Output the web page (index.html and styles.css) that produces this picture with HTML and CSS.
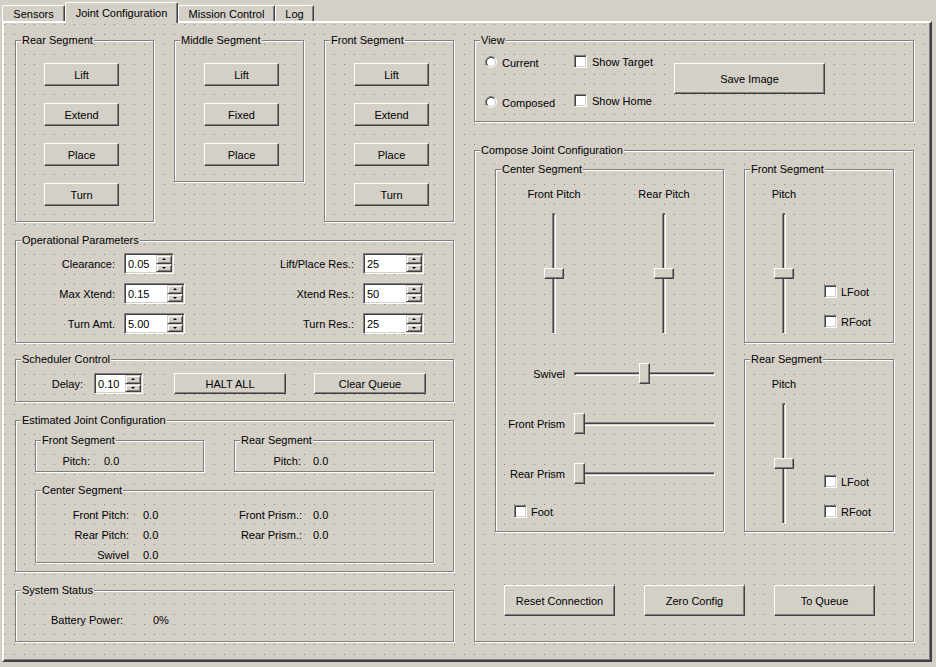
FILE: index.html
```html
<!DOCTYPE html>
<html lang="en">
<head>
<meta charset="utf-8">
<title>Joint Configuration</title>
<link rel="stylesheet" href="styles.css">
</head>
<body>
<div class="tabbar">
  <div class="tab t-sensors">Sensors</div>
  <div class="tab active t-joint">Joint Configuration</div>
  <div class="tab t-mission">Mission Control</div>
  <div class="tab t-log">Log</div>
</div>
<div class="pane">
  <div class="col col-left">
    <div class="seg-row">
      <div class="gb gb-rear">
        <div class="gb-title">Rear Segment</div>
        <div class="btn-stack pl28">
          <div class="btn">Lift</div>
          <div class="btn">Extend</div>
          <div class="btn">Place</div>
          <div class="btn">Turn</div>
        </div>
      </div>
      <div class="gb gb-mid">
        <div class="gb-title">Middle Segment</div>
        <div class="btn-stack pl29">
          <div class="btn">Lift</div>
          <div class="btn">Fixed</div>
          <div class="btn">Place</div>
        </div>
      </div>
      <div class="gb gb-front">
        <div class="gb-title">Front Segment</div>
        <div class="btn-stack pl29">
          <div class="btn">Lift</div>
          <div class="btn">Extend</div>
          <div class="btn">Place</div>
          <div class="btn">Turn</div>
        </div>
      </div>
    </div>

    <div class="gb gb-ops">
      <div class="gb-title">Operational Parameters</div>
      <div class="ops-cols">
        <div class="ops-col ops-l">
          <div class="frow"><span class="lbl-r">Clearance:</span><div class="spin w50"><span class="spin-val">0.05</span><span class="spin-btns"><span class="sb up"></span><span class="sb dn"></span></span></div></div>
          <div class="frow"><span class="lbl-r">Max Xtend:</span><div class="spin w61"><span class="spin-val">0.15</span><span class="spin-btns"><span class="sb up"></span><span class="sb dn"></span></span></div></div>
          <div class="frow"><span class="lbl-r">Turn Amt.</span><div class="spin w61"><span class="spin-val">5.00</span><span class="spin-btns"><span class="sb up"></span><span class="sb dn"></span></span></div></div>
        </div>
        <div class="ops-col ops-r">
          <div class="frow"><span class="lbl-r">Lift/Place Res.:</span><div class="spin w61"><span class="spin-val">25</span><span class="spin-btns"><span class="sb up"></span><span class="sb dn"></span></span></div></div>
          <div class="frow"><span class="lbl-r">Xtend Res.:</span><div class="spin w61"><span class="spin-val">50</span><span class="spin-btns"><span class="sb up"></span><span class="sb dn"></span></span></div></div>
          <div class="frow"><span class="lbl-r">Turn Res.:</span><div class="spin w61"><span class="spin-val">25</span><span class="spin-btns"><span class="sb up"></span><span class="sb dn"></span></span></div></div>
        </div>
      </div>
    </div>

    <div class="gb gb-sched">
      <div class="gb-title">Scheduler Control</div>
      <div class="sched-row">
        <span class="sched-lbl">Delay:</span>
        <div class="spin w49"><span class="spin-val">0.10</span><span class="spin-btns"><span class="sb up"></span><span class="sb dn"></span></span></div>
        <div class="btn btn-halt">HALT ALL</div>
        <div class="btn btn-clear">Clear Queue</div>
      </div>
    </div>

    <div class="gb gb-est">
      <div class="gb-title">Estimated Joint Configuration</div>
      <div class="est-top">
        <div class="gb gb-ef">
          <div class="gb-title">Front Segment</div>
          <div class="est-line"><span class="ef-lbl">Pitch:</span><span class="ef-val">0.0</span></div>
        </div>
        <div class="gb gb-er">
          <div class="gb-title">Rear Segment</div>
          <div class="est-line"><span class="er-lbl">Pitch:</span><span class="er-val">0.0</span></div>
        </div>
      </div>
      <div class="gb gb-ec">
        <div class="gb-title">Center Segment</div>
        <div class="ec-rows">
          <div class="ec-row"><span class="ec-l1">Front Pitch:</span><span class="ec-v1">0.0</span><span class="ec-l2">Front Prism.:</span><span class="ec-v2">0.0</span></div>
          <div class="ec-row"><span class="ec-l1">Rear Pitch:</span><span class="ec-v1">0.0</span><span class="ec-l2">Rear Prism.:</span><span class="ec-v2">0.0</span></div>
          <div class="ec-row"><span class="ec-l1">Swivel</span><span class="ec-v1">0.0</span></div>
        </div>
      </div>
    </div>

    <div class="gb gb-sys">
      <div class="gb-title">System Status</div>
      <div class="sys-row"><span class="sys-lbl">Battery Power:</span><span class="sys-val">0%</span></div>
    </div>
  </div>

  <div class="col col-right">
    <div class="gb gb-view">
      <div class="gb-title">View</div>
      <div class="view-body">
        <div class="view-radios">
          <div class="radio-row">
            <svg class="radio" width="12" height="12" viewBox="0 0 12 12"><circle cx="6" cy="6" r="4" fill="#fff"/><path d="M9.89 2.11A5.5 5.5 0 0 0 2.11 9.89" fill="none" stroke="#808080"/><path d="M2.11 9.89A5.5 5.5 0 0 0 9.89 2.11" fill="none" stroke="#fff"/><path d="M9.18 2.82A4.5 4.5 0 0 0 2.82 9.18" fill="none" stroke="#404040"/><path d="M2.82 9.18A4.5 4.5 0 0 0 9.18 2.82" fill="none" stroke="#d4d0c8"/></svg>
            <span class="opt-text">Current</span>
          </div>
          <div class="radio-row">
            <svg class="radio" width="12" height="12" viewBox="0 0 12 12"><circle cx="6" cy="6" r="4" fill="#fff"/><path d="M9.89 2.11A5.5 5.5 0 0 0 2.11 9.89" fill="none" stroke="#808080"/><path d="M2.11 9.89A5.5 5.5 0 0 0 9.89 2.11" fill="none" stroke="#fff"/><path d="M9.18 2.82A4.5 4.5 0 0 0 2.82 9.18" fill="none" stroke="#404040"/><path d="M2.82 9.18A4.5 4.5 0 0 0 9.18 2.82" fill="none" stroke="#d4d0c8"/></svg>
            <span class="opt-text">Composed</span>
          </div>
        </div>
        <div class="view-checks">
          <div class="chk-row"><span class="chk"></span><span class="opt-text">Show Target</span></div>
          <div class="chk-row"><span class="chk"></span><span class="opt-text">Show Home</span></div>
        </div>
        <div class="btn btn-save">Save Image</div>
      </div>
    </div>

    <div class="gb gb-compose">
      <div class="gb-title">Compose Joint Configuration</div>
      <div class="compose-top">
        <div class="gb gb-center">
          <div class="gb-title">Center Segment</div>
          <div class="vsl-row">
            <div class="vsl-col">
              <div class="vsl-lbl">Front Pitch</div>
              <div class="vslider"><div class="vgroove"></div><div class="vhandle"></div></div>
            </div>
            <div class="vsl-col vsl-col2">
              <div class="vsl-lbl">Rear Pitch</div>
              <div class="vslider"><div class="vgroove"></div><div class="vhandle"></div></div>
            </div>
          </div>
          <div class="hsl-row">
            <span class="hsl-lbl">Swivel</span>
            <div class="hslider"><div class="hgroove"></div><div class="hhandle h-mid"></div></div>
          </div>
          <div class="hsl-row">
            <span class="hsl-lbl">Front Prism</span>
            <div class="hslider"><div class="hgroove"></div><div class="hhandle h-min"></div></div>
          </div>
          <div class="hsl-row">
            <span class="hsl-lbl">Rear Prism</span>
            <div class="hslider"><div class="hgroove"></div><div class="hhandle h-min"></div></div>
          </div>
          <div class="chk-row foot-row"><span class="chk"></span><span class="opt-text tight">Foot</span></div>
        </div>
        <div class="compose-side">
          <div class="gb gb-side gb-sf">
            <div class="gb-title">Front Segment</div>
            <div class="side-body">
              <div class="side-sl">
                <div class="vsl-lbl">Pitch</div>
                <div class="vslider"><div class="vgroove"></div><div class="vhandle"></div></div>
              </div>
              <div class="side-checks">
                <div class="chk-row"><span class="chk"></span><span class="opt-text tight">LFoot</span></div>
                <div class="chk-row"><span class="chk"></span><span class="opt-text tight">RFoot</span></div>
              </div>
            </div>
          </div>
          <div class="gb gb-side gb-sr">
            <div class="gb-title">Rear Segment</div>
            <div class="side-body">
              <div class="side-sl">
                <div class="vsl-lbl">Pitch</div>
                <div class="vslider"><div class="vgroove"></div><div class="vhandle"></div></div>
              </div>
              <div class="side-checks">
                <div class="chk-row"><span class="chk"></span><span class="opt-text tight">LFoot</span></div>
                <div class="chk-row"><span class="chk"></span><span class="opt-text tight">RFoot</span></div>
              </div>
            </div>
          </div>
        </div>
      </div>
      <div class="compose-btns">
        <div class="btn btn-reset">Reset Connection</div>
        <div class="btn btn-zero">Zero Config</div>
        <div class="btn btn-queue">To Queue</div>
      </div>
    </div>
  </div>
</div>
</body>
</html>
```

FILE: styles.css
```css
* { box-sizing: border-box; }
html, body { margin: 0; padding: 0; }
body {
  width: 936px;
  height: 667px;
  overflow: hidden;
  background: #d4d0c8;
  font-family: "Liberation Sans", Arial, sans-serif;
  font-size: 11px;
  line-height: 13px;
  color: #000;
}

/* ---------- tabs ---------- */
.tabbar {
  display: flex;
  align-items: flex-end;
  height: 21px;
  padding-left: 2px;
}
.tab {
  height: 16px;
  background: #d4d0c8;
  border-top: 1px solid #fff;
  border-left: 1px solid #fff;
  border-right: 1px solid #404040;
  box-shadow: inset -1px 0 #808080;
  border-radius: 2px 2px 0 0;
  display: flex;
  align-items: center;
  justify-content: center;
  padding-top: 2px;
  white-space: nowrap;
}
.tab.active {
  height: 21px;
  margin-bottom: -2px;
  position: relative;
  z-index: 1;
  padding-top: 2px;
  padding-bottom: 2px;
}
.t-sensors { width: 63px; }
.t-joint { width: 113px; }
.t-mission { width: 97px; }
.t-log { width: 39px; }

/* ---------- pane ---------- */
.pane {
  margin-left: 2px;
  width: 930px;
  height: 641px;
  border: 2px solid;
  border-color: #fff #404040 #404040 #fff;
  box-shadow: inset -1px -1px #808080;
  background-color: #d4d0c8;
  background-image: conic-gradient(from 270deg at 1px 1px, #808080 90deg, transparent 0);
  background-size: 10px 10px;
  background-position: 0 1px;
  display: flex;
  align-items: flex-start;
}
.col {
  display: flex;
  flex-direction: column;
  width: 440px;
  padding-top: 17px;
}
.col-left { margin-left: 11px; }
.col-right { margin-left: 19px; }

/* ---------- group boxes ---------- */
.gb {
  flex: none;
  border: 1px solid #808080;
  box-shadow: inset 1px 1px #fff, 1px 1px #fff;
}
.gb-title {
  width: max-content;
  height: 13px;
  line-height: 13px;
  margin: -7px 0 0 5px;
  padding: 0 1px;
  background: #d4d0c8;
  white-space: nowrap;
}

/* ---------- buttons ---------- */
.btn {
  flex: none;
  width: 75px;
  height: 23px;
  display: flex;
  align-items: center;
  justify-content: center;
  padding-top: 2px;
  background: #d4d0c8;
  border: 1px solid;
  border-color: #fff #404040 #404040 #fff;
  box-shadow: inset -1px -1px #808080;
  white-space: nowrap;
}

/* ---------- segment row ---------- */
.seg-row {
  display: flex;
  gap: 20px;
  align-items: flex-start;
}
.gb-rear { width: 139px; height: 182px; }
.gb-mid { width: 130px; height: 142px; }
.gb-front { width: 130px; height: 182px; }
.btn-stack {
  display: flex;
  flex-direction: column;
  gap: 17px;
  margin-top: 16px;
}
.pl28 { padding-left: 28px; }
.pl29 { padding-left: 29px; }

/* ---------- spin boxes ---------- */
.spin {
  flex: none;
  display: flex;
  height: 21px;
  border: 1px solid;
  border-color: #808080 #fff #fff #808080;
  box-shadow: inset 1px 1px #404040, inset -1px -1px #d4d0c8;
  background: #fff;
  padding: 1px;
}
.w49 { width: 49px; }
.w50 { width: 50px; }
.w61 { width: 61px; }
.spin-val {
  flex: 1;
  display: flex;
  align-items: center;
  padding: 2px 0 0 2px;
}
.spin-btns {
  width: 16px;
  display: flex;
  flex-direction: column;
}
.sb {
  flex: 1;
  display: flex;
  align-items: center;
  justify-content: center;
  background: #d4d0c8;
  border: 1px solid;
  border-color: #d4d0c8 #404040 #404040 #d4d0c8;
  box-shadow: inset 1px 1px #fff, inset -1px -1px #808080;
}
.sb::after {
  content: "";
  border-left: 2px solid transparent;
  border-right: 2px solid transparent;
}
.sb.up::after { border-bottom: 2px solid #000; }
.sb.dn::after { border-top: 2px solid #000; }

/* ---------- operational parameters ---------- */
.gb-ops { width: 439px; height: 103px; margin-top: 18px; }
.ops-cols { display: flex; margin-top: 6px; }
.ops-col { display: flex; flex-direction: column; gap: 9px; }
.ops-l { width: 169px; }
.frow { display: flex; align-items: center; height: 21px; }
.lbl-r { flex: none; text-align: right; white-space: nowrap; padding-top: 2px; }
.ops-l .lbl-r { width: 99px; }
.ops-r .lbl-r { width: 169px; }
.frow .spin { margin-left: 9px; }

/* ---------- scheduler ---------- */
.gb-sched { width: 439px; height: 43px; margin-top: 16px; }
.sched-row { display: flex; align-items: center; margin-top: 7px; }
.sched-lbl { width: 67px; text-align: right; padding-top: 2px; }
.sched-row .spin { margin-left: 11px; }
.btn-halt { width: 112px; height: 21px; margin-left: 31px; }
.btn-clear { width: 112px; height: 21px; margin-left: 28px; }

/* ---------- estimated ---------- */
.gb-est { width: 439px; height: 152px; margin-top: 18px; }
.est-top { display: flex; gap: 30px; margin: 13px 0 0 19px; }
.gb-ef { width: 169px; height: 32px; }
.gb-er { width: 200px; height: 32px; }
.est-line { display: flex; margin-top: 7px; padding-top: 1px; }
.ef-lbl { width: 54px; text-align: right; }
.ef-val { margin-left: 14px; }
.er-lbl { width: 66px; text-align: right; }
.er-val { margin-left: 12px; }
.gb-ec { width: 399px; height: 73px; margin: 18px 0 0 19px; }
.ec-rows { margin-top: 7px; }
.ec-row { display: flex; align-items: center; height: 20px; }
.ec-row span { padding-top: 2px; }
.ec-l1 { width: 93px; text-align: right; }
.ec-v1 { width: 99px; padding-left: 14px; }
.ec-l2 { width: 74px; text-align: right; }
.ec-v2 { padding-left: 11px; }

/* ---------- system ---------- */
.gb-sys { width: 439px; height: 52px; margin-top: 18px; }
.sys-row { display: flex; margin: 16px 0 0 35px; padding-top: 1px; }
.sys-lbl { width: 102px; }
.sys-val { color: #000; }

/* ---------- view ---------- */
.gb-view { width: 440px; height: 82px; }
.view-body { display: flex; align-items: flex-start; }
.view-radios {
  display: flex;
  flex-direction: column;
  gap: 26px;
  margin: 8px 0 0 10px;
  width: 89px;
}
.radio-row { display: flex; align-items: center; height: 14px; }
.radio { flex: none; display: block; }
.opt-text { margin-left: 5px; white-space: nowrap; padding-top: 2px; }
.opt-text.tight { margin-left: 4px; }
.view-checks {
  display: flex;
  flex-direction: column;
  gap: 26px;
  margin-top: 8px;
  width: 100px;
}
.chk-row { display: flex; align-items: center; height: 13px; }
.chk {
  flex: none;
  width: 13px;
  height: 13px;
  background: #fff;
  border: 1px solid;
  border-color: #808080 #fff #fff #808080;
  box-shadow: inset 1px 1px #404040, inset -1px -1px #d4d0c8;
}
.btn-save { width: 151px; height: 31px; margin-top: 16px; }

/* ---------- compose ---------- */
.gb-compose { width: 440px; height: 492px; margin-top: 28px; }
.compose-top {
  display: flex;
  gap: 20px;
  align-items: flex-start;
  margin: 12px 0 0 20px;
}
.gb-center { width: 229px; height: 363px; }
.compose-side { display: flex; flex-direction: column; gap: 16px; width: 150px; }
.gb-side { width: 150px; }
.gb-sf { height: 174px; }
.gb-sr { height: 173px; }

.vsl-row { display: flex; margin-left: 18px; }
.vsl-col {
  width: 80px;
  display: flex;
  flex-direction: column;
  align-items: center;
}
.vsl-col2 { margin-left: 30px; }
.vsl-lbl { margin-top: 11px; height: 13px; padding-top: 1px; white-space: nowrap; }
.vslider {
  position: relative;
  margin-top: 13px;
  width: 20px;
  height: 121px;
  display: flex;
  justify-content: center;
}
.vgroove {
  width: 4px;
  height: 100%;
  border: 1px solid;
  border-color: #808080 #fff #fff #808080;
  box-shadow: inset 1px 1px #404040;
  background: #d4d0c8;
}
.vhandle {
  position: absolute;
  left: 0;
  top: 55px;
  width: 20px;
  height: 11px;
  background: #d4d0c8;
  border: 1px solid;
  border-color: #fff #404040 #404040 #fff;
  box-shadow: inset -1px -1px #808080;
}

.hsl-row {
  display: flex;
  align-items: center;
  height: 21px;
  margin-top: 29px;
}
.hsl-lbl { width: 69px; text-align: right; white-space: nowrap; padding-top: 2px; }
.hslider {
  position: relative;
  margin-left: 9px;
  width: 141px;
  height: 21px;
  display: flex;
  align-items: center;
}
.hgroove {
  width: 100%;
  height: 4px;
  border: 1px solid;
  border-color: #808080 #fff #fff #808080;
  box-shadow: inset 1px 1px #404040;
  background: #d4d0c8;
}
.hhandle {
  position: absolute;
  top: 0;
  width: 11px;
  height: 21px;
  background: #d4d0c8;
  border: 1px solid;
  border-color: #fff #404040 #404040 #fff;
  box-shadow: inset -1px -1px #808080;
}
.h-min { left: 0; }
.h-mid { left: 65px; }
.foot-row { margin: 21px 0 0 18px; }

.side-body { display: flex; align-items: flex-start; }
.side-sl {
  width: 40px;
  margin-left: 19px;
  display: flex;
  flex-direction: column;
  align-items: center;
}
.side-checks {
  display: flex;
  flex-direction: column;
  gap: 17px;
  margin: 109px 0 0 20px;
}

.compose-btns { display: flex; gap: 29px; margin: 53px 0 0 29px; }
.btn-reset { width: 111px; height: 31px; }
.btn-zero { width: 101px; height: 31px; }
.btn-queue { width: 101px; height: 31px; }
```
